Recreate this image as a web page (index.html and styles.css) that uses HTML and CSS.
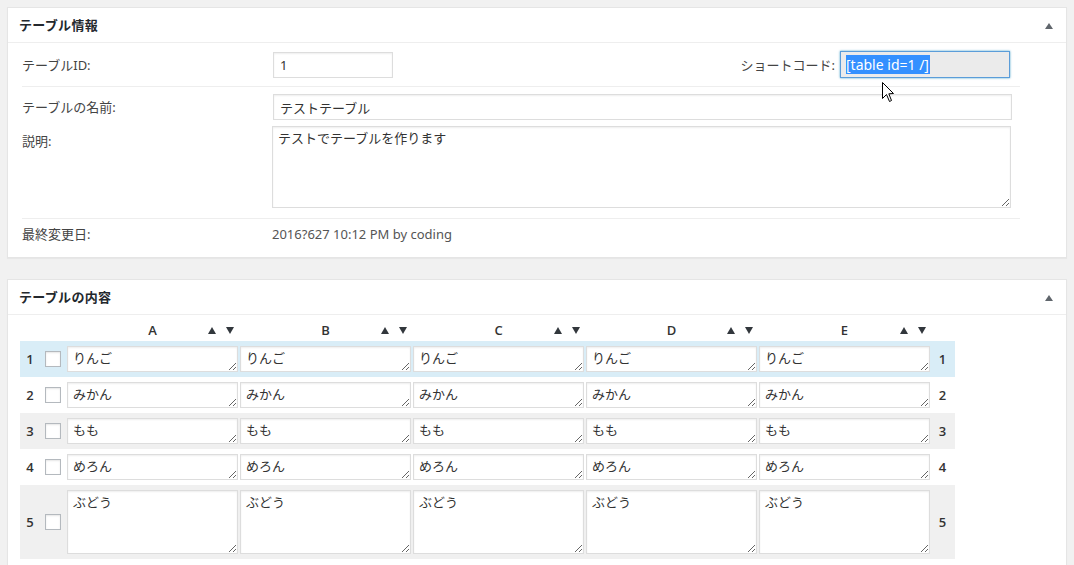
FILE: index.html
```html
<!DOCTYPE html>
<html lang="ja">
<head>
<meta charset="utf-8">
<title>テーブル編集</title>
<link rel="stylesheet" href="styles.css">
</head>
<body>
<div class="page">
  <section class="postbox">
    <header class="hndle">
      <h2>テーブル情報</h2>
      <span class="toggle"></span>
    </header>
    <div class="inside info">
      <div class="row row-id">
        <div class="label">テーブルID:</div>
        <div class="value">
          <input class="field id-input" type="text" value="1">
          <div class="shortcode">
            <span class="sc-label">ショートコード:</span>
            <div class="sc-input"><span class="sel">[table id=1 /]</span></div>
          </div>
        </div>
      </div>
      <div class="row row-group">
        <div class="line line-name">
          <div class="label">テーブルの名前:</div>
          <input class="field name-input" type="text" value="テストテーブル">
        </div>
        <div class="line line-desc">
          <div class="label label-top">説明:</div>
          <textarea class="field desc">テストでテーブルを作ります</textarea>
        </div>
      </div>
      <div class="row row-last">
        <div class="label">最終変更日:</div>
        <div class="date">2016?627 10:12 PM by coding</div>
      </div>
    </div>
  </section>

  <section class="postbox">
    <header class="hndle">
      <h2>テーブルの内容</h2>
      <span class="toggle"></span>
    </header>
    <div class="inside grid-wrap">
      <div class="colhead">
        <div class="hcell"><span class="letter">A</span><span class="arrows"><span class="up"></span><span class="down"></span></span></div>
        <div class="hcell"><span class="letter">B</span><span class="arrows"><span class="up"></span><span class="down"></span></span></div>
        <div class="hcell"><span class="letter">C</span><span class="arrows"><span class="up"></span><span class="down"></span></span></div>
        <div class="hcell"><span class="letter">D</span><span class="arrows"><span class="up"></span><span class="down"></span></span></div>
        <div class="hcell"><span class="letter">E</span><span class="arrows"><span class="up"></span><span class="down"></span></span></div>
      </div>

      <div class="trow active">
        <div class="num">1</div>
        <div class="cb"><input type="checkbox" class="check"></div>
        <div class="cells">
          <textarea class="cell">りんご</textarea><textarea class="cell">りんご</textarea><textarea class="cell">りんご</textarea><textarea class="cell">りんご</textarea><textarea class="cell">りんご</textarea>
        </div>
        <div class="num num-r">1</div>
      </div>
      <div class="trow">
        <div class="num">2</div>
        <div class="cb"><input type="checkbox" class="check"></div>
        <div class="cells">
          <textarea class="cell">みかん</textarea><textarea class="cell">みかん</textarea><textarea class="cell">みかん</textarea><textarea class="cell">みかん</textarea><textarea class="cell">みかん</textarea>
        </div>
        <div class="num num-r">2</div>
      </div>
      <div class="trow odd">
        <div class="num">3</div>
        <div class="cb"><input type="checkbox" class="check"></div>
        <div class="cells">
          <textarea class="cell">もも</textarea><textarea class="cell">もも</textarea><textarea class="cell">もも</textarea><textarea class="cell">もも</textarea><textarea class="cell">もも</textarea>
        </div>
        <div class="num num-r">3</div>
      </div>
      <div class="trow">
        <div class="num">4</div>
        <div class="cb"><input type="checkbox" class="check"></div>
        <div class="cells">
          <textarea class="cell">めろん</textarea><textarea class="cell">めろん</textarea><textarea class="cell">めろん</textarea><textarea class="cell">めろん</textarea><textarea class="cell">めろん</textarea>
        </div>
        <div class="num num-r">4</div>
      </div>
      <div class="trow odd tall">
        <div class="num">5</div>
        <div class="cb"><input type="checkbox" class="check"></div>
        <div class="cells">
          <textarea class="cell">ぶどう</textarea><textarea class="cell">ぶどう</textarea><textarea class="cell">ぶどう</textarea><textarea class="cell">ぶどう</textarea><textarea class="cell">ぶどう</textarea>
        </div>
        <div class="num num-r">5</div>
      </div>
    </div>
  </section>

  <svg class="cursor" width="13" height="21" viewBox="0 0 13 21" aria-hidden="true">
    <path d="M0.5 0.5 L0.5 16.5 L4.5 12.5 L7.5 19.5 L9.5 18.5 L6.8 11.8 L11.5 11.5 Z" fill="#fff" stroke="#000" stroke-width="1" stroke-linejoin="miter"/>
  </svg>
</div>
</body>
</html>
```

FILE: styles.css
```css
* { box-sizing: border-box; }

html, body {
  margin: 0;
  padding: 0;
  background: #f1f1f1;
}

body {
  font-family: "Noto Sans", "Noto Sans CJK JP", sans-serif;
  font-size: 13px;
  line-height: 18px;
  color: #444;
}

.page {
  position: relative;
  padding: 7px 7px 0 7px;
}

.postbox {
  background: #fff;
  border: 1px solid #e5e5e5;
  box-shadow: 0 1px 1px rgba(0, 0, 0, 0.04);
  margin-bottom: 21px;
}

.hndle {
  height: 35px;
  display: flex;
  align-items: center;
  justify-content: space-between;
  padding: 0 13px 0 11px;
  border-bottom: 1px solid #eee;
}

.hndle h2 {
  margin: 0;
  font-size: 13px;
  font-weight: 700;
  color: #23282d;
  font-family: "Noto Sans CJK JP", "Noto Sans", sans-serif;
  letter-spacing: 0.3px;
}

.toggle {
  width: 0;
  height: 0;
  border-left: 4px solid transparent;
  border-right: 4px solid transparent;
  border-bottom: 6px solid #60666c;
  margin-top: 1px;
}

/* ---------- info panel ---------- */
.info {
  padding: 0 46px 0 14px;
}

.row {
  border-bottom: 1px solid #eee;
}

.row:last-child {
  border-bottom: none;
}

.label {
  width: 250px;
  flex: none;
  color: #444;
}

.field {
  border: 1px solid #ddd;
  box-shadow: inset 0 1px 2px rgba(0, 0, 0, 0.07);
  background: #fff;
  color: #333;
  font-family: "Noto Sans", "Noto Sans CJK JP", sans-serif;
  font-size: 13px;
  line-height: 18px;
  outline: none;
  margin: 0;
}

.row-id {
  display: flex;
  align-items: center;
  height: 44px;
  padding: 0;
}

.value {
  flex: 1;
  display: flex;
  align-items: center;
}

.id-input {
  width: 120px;
  height: 26px;
  padding: 2px 6px;
  margin-left: 1px;
}

.shortcode {
  margin-left: auto;
  margin-right: 10px;
  display: flex;
  align-items: center;
  gap: 5px;
}

.sc-label {
  color: #444;
}

.sc-input {
  width: 170px;
  height: 27px;
  border: 1px solid #5b9dd9;
  box-shadow: 0 0 2px rgba(30, 140, 190, 0.8);
  background: #ebebeb;
  padding: 0 5px;
  display: flex;
  align-items: center;
}

.sel {
  background: #3390ff;
  color: #fff;
  font-size: 14px;
  line-height: 19px;
  padding-right: 1px;
}

.row-group {
  padding: 7px 0 10px 0;
}

.line {
  display: flex;
}

.line-name {
  align-items: center;
}

.name-input {
  width: 739px;
  height: 26px;
  padding: 2px 6px;
  margin-left: 1px;
}

.line-desc {
  margin-top: 6px;
  align-items: flex-start;
}

.label-top {
  padding-top: 6px;
}

.desc {
  width: 739px;
  height: 82px;
  padding: 2px 5px;
  resize: both;
  overflow: hidden;
}

.row-last {
  display: flex;
  align-items: center;
  padding: 6px 0 14px 0;
}

.date {
  color: #555;
}

/* ---------- table panel ---------- */
.grid-wrap {
  padding: 4px 12px 12px 12px;
}

.colhead {
  display: flex;
  gap: 2px;
  margin-left: 47px;
  height: 22px;
}

.hcell {
  width: 171px;
  display: grid;
  grid-template-columns: 1fr auto 1fr;
  align-items: center;
}

.letter {
  grid-column: 2;
  font-weight: 600;
  color: #333;
  font-family: "Open Sans", "Noto Sans", sans-serif;
}

.arrows {
  grid-column: 3;
  justify-self: end;
  display: flex;
  align-items: center;
  gap: 10px;
  margin-right: 4px;
}

.up {
  width: 0;
  height: 0;
  border-left: 4px solid transparent;
  border-right: 4px solid transparent;
  border-bottom: 7px solid #32373c;
}

.down {
  width: 0;
  height: 0;
  border-left: 4px solid transparent;
  border-right: 4px solid transparent;
  border-top: 7px solid #32373c;
}

.trow {
  display: flex;
  align-items: center;
  width: 935px;
  padding: 5px 0;
}

.trow.odd {
  background: #f0f0f0;
}

.trow.active {
  background: #d9edf7;
}

.num {
  width: 20px;
  flex: none;
  text-align: center;
  font-weight: 600;
  color: #333;
  font-family: "Open Sans", "Noto Sans", sans-serif;
}

.num-r {
  width: 25px;
}

.cb {
  width: 27px;
  flex: none;
  display: flex;
  align-items: center;
}

.check {
  -webkit-appearance: none;
  appearance: none;
  width: 16px;
  height: 16px;
  margin: 0 0 0 5px;
  border: 1px solid #b4b9be;
  background: #fff;
  box-shadow: inset 0 1px 2px rgba(0, 0, 0, 0.1);
  border-radius: 0;
}

.cells {
  display: flex;
  gap: 2px;
}

.cell {
  width: 171px;
  height: 26px;
  margin: 0;
  padding: 2px 5px;
  border: 1px solid #ddd;
  box-shadow: inset 0 1px 2px rgba(0, 0, 0, 0.07);
  background: #fff;
  color: #333;
  font-family: "Noto Sans CJK JP", "Noto Sans", sans-serif;
  font-size: 13px;
  line-height: 18px;
  overflow: hidden;
  resize: both;
  outline: none;
}

.tall .cell {
  height: 64px;
}

.cursor {
  position: absolute;
  left: 882px;
  top: 82px;
}
```
